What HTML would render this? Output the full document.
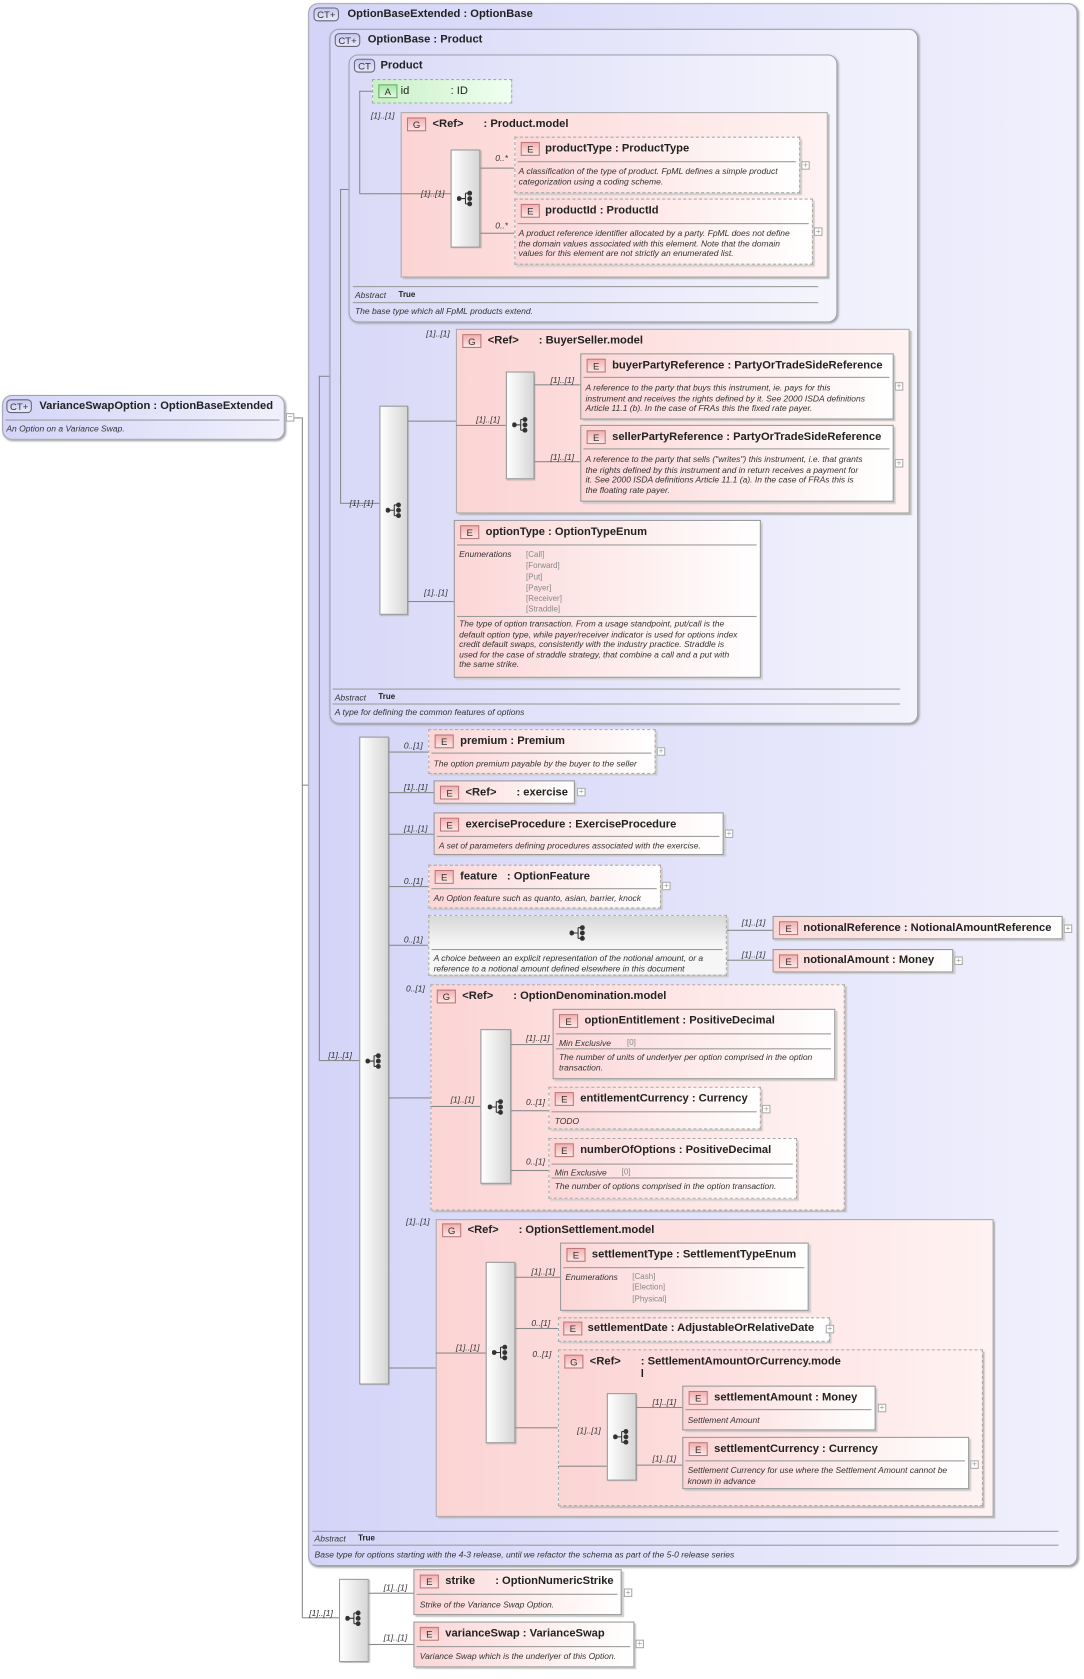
<!DOCTYPE html>
<html><head><meta charset="utf-8"><style>
html,body{margin:0;padding:0;background:#fff;width:1084px;height:1672px;overflow:hidden}
#r{position:absolute;left:0;top:0;width:1020px;height:1573px;transform:scale(1.0627,1.0675);transform-origin:0 0;font-family:"Liberation Sans",sans-serif}
#r div,#r span{position:absolute;box-sizing:border-box}
#r span{margin-top:1px}
.ct{border:1px solid #a0a0b0;border-radius:9px;background:linear-gradient(to right,#d4d4f8,#f0f0fd);box-shadow:1px 1px 2px #999}
.gp{background:linear-gradient(to right,#fcd4d4,#fff2f2);border:1px solid #aaa;box-shadow:2px 2px 1px #bbb}
.el{background:linear-gradient(to right,#fcd6d6,#fff);border:1px solid #999;box-shadow:2px 2px 1px #ccc}
.d{border-style:dashed!important;border-color:#aaa!important}
.sq{background:linear-gradient(to right,#fff,#d6d6d6);border:1px solid #999;box-shadow:1px 1px 1px #aaa}
.b{width:18px;height:13px;border:1px solid #b77;background:linear-gradient(#f3b0b0,#fce6e6);font-size:9px;text-align:center;line-height:12px;color:#333}
.bc{width:24px;height:13px;border:1px solid #667;border-radius:4px;background:linear-gradient(#c8c8f0,#e8e8fa);font-size:9px;text-align:center;line-height:12px;color:#333}
.t{font-weight:bold;font-size:10.5px;color:#222;white-space:nowrap}
.i{font-style:italic;font-size:8px;color:#333;white-space:nowrap;line-height:9.6px}
.e{font-size:7.5px;color:#888;line-height:10.3px;white-space:nowrap}
.m{font-style:italic;font-size:8px;color:#333;white-space:nowrap}
.h{height:0;border-top:1px solid #888}
.v{width:0;border-left:1px solid #888}
.s{height:0;border-top:1px solid #999}
.p{width:8px;height:8px;border:1px solid #aaa;background:#fff;font-size:8px;line-height:6px;text-align:center;color:#999}
</style></head><body><div id="r">
<div class="ct" style="left:2px;top:370px;width:266px;height:42px"></div>
<div class="bc" style="left:6px;top:374px">CT+</div>
<span class="t" style="left:37px;top:373px">VarianceSwapOption : OptionBaseExtended</span>
<div class="s" style="left:5px;top:393px;width:258px"></div>
<span class="i" style="left:6px;top:396px">An Option on a Variance Swap.</span>
<div class="p" style="left:269px;top:387px">−</div>
<div class="h" style="left:277px;top:391px;width:7px"></div>
<div class="v" style="left:284px;top:391px;height:1124px"></div>
<div class="h" style="left:284px;top:735px;width:6px"></div>
<div class="h" style="left:284px;top:1515px;width:35px"></div>

<div class="ct" style="left:290px;top:3px;width:724px;height:1464px"></div>
<div class="bc" style="left:295px;top:7px">CT+</div>
<span class="t" style="left:327px;top:6px">OptionBaseExtended : OptionBase</span>
<div class="v" style="left:300px;top:352px;height:641px"></div>
<div class="h" style="left:300px;top:352px;width:10px"></div>
<div class="h" style="left:300px;top:993px;width:38px"></div>

<div class="ct" style="left:310px;top:27px;width:554px;height:651px;background:linear-gradient(to right,#d8d8f8,#f3f3fd)"></div>
<div class="bc" style="left:315px;top:31px">CT+</div>
<span class="t" style="left:346px;top:30px">OptionBase : Product</span>
<div class="v" style="left:320px;top:177px;height:294px"></div>
<div class="h" style="left:320px;top:177px;width:8px"></div>
<div class="h" style="left:320px;top:471px;width:37px"></div>

<div class="ct" style="left:328px;top:51px;width:460px;height:251px;background:linear-gradient(to right,#dadaf8,#f5f5fd)"></div>
<div class="bc" style="left:333px;top:55px;width:20px">CT</div>
<span class="t" style="left:358px;top:54px">Product</span>
<div class="v" style="left:338px;top:85px;height:96px"></div>
<div class="h" style="left:338px;top:85px;width:12px"></div>
<div class="h" style="left:338px;top:181px;width:39px"></div>
<div style="left:350px;top:74px;width:132px;height:23px;border:1px dashed #aaa;background:linear-gradient(to right,#c8f0c8,#f0fff0)"></div>
<div class="b" style="left:356px;top:79px;border-color:#6a6;background:linear-gradient(#a8e8a8,#e0f8e0)">A</div>
<span class="t" style="left:377px;top:78px;font-weight:normal">id</span>
<span class="t" style="left:424px;top:78px;font-weight:normal">: ID</span>
<span class="m" style="left:349px;top:103px">[1]..[1]</span>
<div class="gp" style="left:377px;top:105px;width:402px;height:155px"></div>
<div class="b" style="left:383px;top:110px">G</div>
<span class="t" style="left:407px;top:109px">&lt;Ref&gt;</span>
<span class="t" style="left:455px;top:109px">: Product.model</span>
<div class="h" style="left:377px;top:181px;width:47px"></div>
<span class="m" style="left:396px;top:176px">[1]..[1]</span>
<div class="sq" style="left:424px;top:140px;width:28px;height:92px"></div>
<div class="h" style="left:452px;top:157px;width:32px"></div>
<div class="h" style="left:452px;top:218px;width:32px"></div>
<span class="m" style="left:466px;top:143px">0..*</span>
<span class="m" style="left:466px;top:206px">0..*</span>
<div class="el d" style="left:484px;top:128px;width:269px;height:53px"></div>
<div class="b" style="left:490px;top:133px">E</div>
<span class="t" style="left:513px;top:132px">productType : ProductType</span>
<div class="s" style="left:487px;top:151px;width:262px"></div>
<span class="i" style="left:488px;top:155px">A classification of the type of product. FpML defines a simple product<br>categorization using a coding scheme.</span>
<div class="p" style="left:754px;top:151px">+</div>
<div class="el d" style="left:484px;top:186px;width:281px;height:62px"></div>
<div class="b" style="left:490px;top:191px">E</div>
<span class="t" style="left:513px;top:190px">productId : ProductId</span>
<div class="s" style="left:487px;top:209px;width:274px"></div>
<span class="i" style="left:488px;top:213px">A product reference identifier allocated by a party. FpML does not define<br>the domain values associated with this element. Note that the domain<br>values for this element are not strictly an enumerated list.</span>
<div class="p" style="left:766px;top:213px">+</div>
<div class="s" style="left:332px;top:268px;width:438px"></div>
<span class="i" style="left:334px;top:271px">Abstract</span><span class="t" style="left:375px;top:270px;font-size:7.5px">True</span>
<div class="s" style="left:332px;top:283px;width:438px"></div>
<span class="i" style="left:334px;top:286px">The base type which all FpML products extend.</span>

<div class="sq" style="left:357px;top:380px;width:27px;height:196px"></div>
<span class="m" style="left:329px;top:466px">[1]..[1]</span>
<div class="h" style="left:384px;top:394px;width:45px"></div>
<div class="h" style="left:384px;top:563px;width:43px"></div>
<span class="m" style="left:401px;top:307px">[1]..[1]</span>
<div class="gp" style="left:429px;top:308px;width:427px;height:173px"></div>
<div class="b" style="left:435px;top:313px">G</div>
<span class="t" style="left:459px;top:312px">&lt;Ref&gt;</span>
<span class="t" style="left:507px;top:312px">: BuyerSeller.model</span>
<div class="h" style="left:429px;top:398px;width:47px"></div>
<span class="m" style="left:448px;top:388px">[1]..[1]</span>
<div class="sq" style="left:476px;top:348px;width:27px;height:101px"></div>
<div class="h" style="left:503px;top:360px;width:43px"></div>
<div class="h" style="left:503px;top:432px;width:43px"></div>
<span class="m" style="left:518px;top:351px">[1]..[1]</span>
<span class="m" style="left:518px;top:423px">[1]..[1]</span>
<div class="el" style="left:546px;top:331px;width:295px;height:62px"></div>
<div class="b" style="left:552px;top:336px">E</div>
<span class="t" style="left:576px;top:335px">buyerPartyReference : PartyOrTradeSideReference</span>
<div class="s" style="left:549px;top:353px;width:288px"></div>
<span class="i" style="left:551px;top:358px">A reference to the party that buys this instrument, ie. pays for this<br>instrument and receives the rights defined by it. See 2000 ISDA definitions<br>Article 11.1 (b). In the case of FRAs this the fixed rate payer.</span>
<div class="p" style="left:842px;top:358px">+</div>
<div class="el" style="left:546px;top:398px;width:295px;height:72px"></div>
<div class="b" style="left:552px;top:403px">E</div>
<span class="t" style="left:576px;top:402px">sellerPartyReference : PartyOrTradeSideReference</span>
<div class="s" style="left:549px;top:420px;width:288px"></div>
<span class="i" style="left:551px;top:425px">A reference to the party that sells ("writes") this instrument, i.e. that grants<br>the rights defined by this instrument and in return receives a payment for<br>it. See 2000 ISDA definitions Article 11.1 (a). In the case of FRAs this is<br>the floating rate payer.</span>
<div class="p" style="left:842px;top:430px">+</div>
<span class="m" style="left:399px;top:550px">[1]..[1]</span>
<div class="el" style="left:427px;top:487px;width:289px;height:148px"></div>
<div class="b" style="left:433px;top:492px">E</div>
<span class="t" style="left:457px;top:491px">optionType : OptionTypeEnum</span>
<div class="s" style="left:430px;top:510px;width:282px"></div>
<span class="i" style="left:432px;top:514px">Enumerations</span>
<span class="e" style="left:495px;top:514px">[Call]<br>[Forward]<br>[Put]<br>[Payer]<br>[Receiver]<br>[Straddle]</span>
<div class="s" style="left:430px;top:577px;width:282px"></div>
<span class="i" style="left:432px;top:579px">The type of option transaction. From a usage standpoint, put/call is the<br>default option type, while payer/receiver indicator is used for options index<br>credit default swaps, consistently with the industry practice. Straddle is<br>used for the case of straddle strategy, that combine a call and a put with<br>the same strike.</span>
<div class="s" style="left:313px;top:645px;width:534px"></div>
<span class="i" style="left:315px;top:648px">Abstract</span><span class="t" style="left:356px;top:647px;font-size:7.5px">True</span>
<div class="s" style="left:313px;top:659px;width:534px"></div>
<span class="i" style="left:315px;top:662px">A type for defining the common features of options</span>

<div class="sq" style="left:338px;top:690px;width:28px;height:607px"></div>
<span class="m" style="left:309px;top:983px">[1]..[1]</span>
<div class="h" style="left:366px;top:704px;width:37px"></div>
<div class="h" style="left:366px;top:742px;width:42px"></div>
<div class="h" style="left:366px;top:781px;width:42px"></div>
<div class="h" style="left:366px;top:830px;width:37px"></div>
<div class="h" style="left:366px;top:885px;width:37px"></div>
<div class="h" style="left:366px;top:1028px;width:39px"></div>
<div class="h" style="left:366px;top:1281px;width:44px"></div>
<span class="m" style="left:380px;top:693px">0..[1]</span>
<span class="m" style="left:380px;top:732px">[1]..[1]</span>
<span class="m" style="left:380px;top:771px">[1]..[1]</span>
<span class="m" style="left:380px;top:820px">0..[1]</span>
<span class="m" style="left:380px;top:875px">0..[1]</span>
<span class="m" style="left:382px;top:921px">0..[1]</span>
<span class="m" style="left:382px;top:1139px">[1]..[1]</span>

<div class="el d" style="left:403px;top:683px;width:214px;height:42px"></div>
<div class="b" style="left:409px;top:688px">E</div>
<span class="t" style="left:433px;top:687px">premium : Premium</span>
<div class="s" style="left:406px;top:705px;width:207px"></div>
<span class="i" style="left:408px;top:710px">The option premium payable by the buyer to the seller</span>
<div class="p" style="left:618px;top:700px">+</div>

<div class="el" style="left:408px;top:731px;width:133px;height:22px"></div>
<div class="b" style="left:414px;top:736px">E</div>
<span class="t" style="left:438px;top:735px">&lt;Ref&gt;</span><span class="t" style="left:486px;top:735px">: exercise</span>
<div class="p" style="left:543px;top:738px">+</div>

<div class="el" style="left:408px;top:761px;width:273px;height:40px"></div>
<div class="b" style="left:414px;top:766px">E</div>
<span class="t" style="left:438px;top:765px">exerciseProcedure : ExerciseProcedure</span>
<div class="s" style="left:411px;top:783px;width:266px"></div>
<span class="i" style="left:413px;top:787px">A set of parameters defining procedures associated with the exercise.</span>
<div class="p" style="left:682px;top:777px">+</div>

<div class="el d" style="left:403px;top:810px;width:219px;height:41px"></div>
<div class="b" style="left:409px;top:815px">E</div>
<span class="t" style="left:433px;top:814px">feature</span><span class="t" style="left:477px;top:814px">: OptionFeature</span>
<div class="s" style="left:406px;top:832px;width:212px"></div>
<span class="i" style="left:408px;top:836px">An Option feature such as quanto, asian, barrier, knock</span>
<div class="p" style="left:623px;top:826px">+</div>

<div style="left:403px;top:857px;width:281px;height:57px;border:1px dashed #aaa;background:linear-gradient(#d8d8d8,#f6f6f6 50%,#f6f6f6);box-shadow:2px 2px 1px #ccc"></div>
<svg style="position:absolute;left:536px;top:866px" width="16" height="16" viewBox="0 0 16 16"><g fill="#333" stroke="#333"><circle cx="2" cy="8" r="1.8"/><circle cx="12" cy="3" r="1.8"/><circle cx="12" cy="8" r="1.8"/><circle cx="12" cy="13" r="1.8"/><path d="M2 8H8M8 3V13M8 3H12M8 13H12" fill="none" stroke-width="1"/></g></svg>
<div class="s" style="left:406px;top:889px;width:274px"></div>
<span class="i" style="left:408px;top:892px">A choice between an explicit representation of the notional amount, or a<br>reference to a notional amount defined elsewhere in this document</span>
<div class="h" style="left:684px;top:871px;width:43px"></div>
<div class="h" style="left:684px;top:899px;width:43px"></div>
<span class="m" style="left:698px;top:859px">[1]..[1]</span>
<span class="m" style="left:698px;top:889px">[1]..[1]</span>
<div class="el" style="left:727px;top:858px;width:273px;height:22px"></div>
<div class="b" style="left:733px;top:863px">E</div>
<span class="t" style="left:756px;top:862px">notionalReference : NotionalAmountReference</span>
<div class="p" style="left:1001px;top:866px">+</div>
<div class="el" style="left:727px;top:889px;width:170px;height:22px"></div>
<div class="b" style="left:733px;top:894px">E</div>
<span class="t" style="left:756px;top:892px">notionalAmount : Money</span>
<div class="p" style="left:898px;top:896px">+</div>

<div class="gp d" style="left:405px;top:922px;width:390px;height:212px"></div>
<div class="b" style="left:411px;top:927px">G</div>
<span class="t" style="left:435px;top:926px">&lt;Ref&gt;</span>
<span class="t" style="left:483px;top:926px">: OptionDenomination.model</span>
<div class="h" style="left:405px;top:1036px;width:47px"></div>
<span class="m" style="left:424px;top:1025px">[1]..[1]</span>
<div class="sq" style="left:452px;top:964px;width:29px;height:145px"></div>
<div class="h" style="left:481px;top:978px;width:39px"></div>
<div class="h" style="left:481px;top:1040px;width:35px"></div>
<div class="h" style="left:481px;top:1096px;width:35px"></div>
<span class="m" style="left:495px;top:967px">[1]..[1]</span>
<span class="m" style="left:495px;top:1027px">0..[1]</span>
<span class="m" style="left:495px;top:1083px">0..[1]</span>
<div class="el" style="left:520px;top:945px;width:266px;height:66px"></div>
<div class="b" style="left:526px;top:950px">E</div>
<span class="t" style="left:550px;top:949px">optionEntitlement : PositiveDecimal</span>
<div class="s" style="left:523px;top:968px;width:259px"></div>
<span class="i" style="left:526px;top:972px">Min Exclusive</span><span class="e" style="left:590px;top:971px">[0]</span>
<div class="s" style="left:523px;top:982px;width:259px"></div>
<span class="i" style="left:526px;top:985px">The number of units of underlyer per option comprised in the option<br>transaction.</span>
<div class="el d" style="left:516px;top:1018px;width:200px;height:40px"></div>
<div class="b" style="left:522px;top:1023px">E</div>
<span class="t" style="left:546px;top:1022px">entitlementCurrency : Currency</span>
<div class="s" style="left:519px;top:1041px;width:193px"></div>
<span class="i" style="left:522px;top:1045px">TODO</span>
<div class="p" style="left:717px;top:1035px">+</div>
<div class="el d" style="left:516px;top:1066px;width:234px;height:57px"></div>
<div class="b" style="left:522px;top:1071px">E</div>
<span class="t" style="left:546px;top:1070px">numberOfOptions : PositiveDecimal</span>
<div class="s" style="left:519px;top:1090px;width:227px"></div>
<span class="i" style="left:522px;top:1093px">Min Exclusive</span><span class="e" style="left:585px;top:1092px">[0]</span>
<div class="s" style="left:519px;top:1103px;width:227px"></div>
<span class="i" style="left:522px;top:1106px">The number of options comprised in the option transaction.</span>

<div class="gp" style="left:410px;top:1142px;width:525px;height:279px"></div>
<div class="b" style="left:416px;top:1146px">G</div>
<span class="t" style="left:440px;top:1145px">&lt;Ref&gt;</span>
<span class="t" style="left:488px;top:1145px">: OptionSettlement.model</span>
<div class="h" style="left:410px;top:1267px;width:47px"></div>
<span class="m" style="left:429px;top:1257px">[1]..[1]</span>
<div class="sq" style="left:457px;top:1182px;width:28px;height:170px"></div>
<div class="h" style="left:485px;top:1196px;width:42px"></div>
<div class="h" style="left:485px;top:1244px;width:40px"></div>
<div class="h" style="left:485px;top:1337px;width:40px"></div>
<span class="m" style="left:500px;top:1186px">[1]..[1]</span>
<span class="m" style="left:500px;top:1234px">0..[1]</span>
<span class="m" style="left:501px;top:1263px">0..[1]</span>
<div class="el" style="left:527px;top:1164px;width:234px;height:64px"></div>
<div class="b" style="left:533px;top:1169px">E</div>
<span class="t" style="left:557px;top:1168px">settlementType : SettlementTypeEnum</span>
<div class="s" style="left:530px;top:1187px;width:227px"></div>
<span class="i" style="left:532px;top:1191px">Enumerations</span>
<span class="e" style="left:595px;top:1190px">[Cash]<br>[Election]<br>[Physical]</span>
<div class="el d" style="left:525px;top:1234px;width:256px;height:23px"></div>
<div class="b" style="left:530px;top:1238px">E</div>
<span class="t" style="left:553px;top:1237px">settlementDate : AdjustableOrRelativeDate</span>
<div class="p" style="left:777px;top:1241px">+</div>
<div class="gp d" style="left:525px;top:1264px;width:400px;height:147px"></div>
<div class="b" style="left:531px;top:1269px">G</div>
<span class="t" style="left:555px;top:1268px">&lt;Ref&gt;</span>
<span class="t" style="left:603px;top:1268px">: SettlementAmountOrCurrency.mode<br>l</span>
<div class="h" style="left:525px;top:1373px;width:46px"></div>
<span class="m" style="left:543px;top:1335px">[1]..[1]</span>
<div class="sq" style="left:571px;top:1305px;width:28px;height:82px"></div>
<div class="h" style="left:599px;top:1318px;width:43px"></div>
<div class="h" style="left:599px;top:1372px;width:43px"></div>
<span class="m" style="left:614px;top:1308px">[1]..[1]</span>
<span class="m" style="left:614px;top:1361px">[1]..[1]</span>
<div class="el" style="left:642px;top:1298px;width:182px;height:42px"></div>
<div class="b" style="left:648px;top:1303px">E</div>
<span class="t" style="left:672px;top:1302px">settlementAmount : Money</span>
<div class="s" style="left:645px;top:1320px;width:175px"></div>
<span class="i" style="left:647px;top:1325px">Settlement Amount</span>
<div class="p" style="left:826px;top:1315px">+</div>
<div class="el" style="left:642px;top:1346px;width:270px;height:49px"></div>
<div class="b" style="left:648px;top:1351px">E</div>
<span class="t" style="left:672px;top:1350px">settlementCurrency : Currency</span>
<div class="s" style="left:645px;top:1368px;width:263px"></div>
<span class="i" style="left:647px;top:1372px">Settlement Currency for use where the Settlement Amount cannot be<br>known in advance</span>
<div class="p" style="left:913px;top:1368px">+</div>

<div class="s" style="left:294px;top:1434px;width:702px"></div>
<span class="i" style="left:296px;top:1436px">Abstract</span><span class="t" style="left:337px;top:1435px;font-size:7.5px">True</span>
<div class="s" style="left:294px;top:1447px;width:702px"></div>
<span class="i" style="left:296px;top:1451px">Base type for options starting with the 4-3 release, until we refactor the schema as part of the 5-0 release series</span>

<span class="m" style="left:291px;top:1506px">[1]..[1]</span>
<div class="sq" style="left:319px;top:1479px;width:28px;height:78px"></div>
<div class="h" style="left:347px;top:1492px;width:42px"></div>
<div class="h" style="left:347px;top:1540px;width:42px"></div>
<span class="m" style="left:361px;top:1482px">[1]..[1]</span>
<span class="m" style="left:361px;top:1529px">[1]..[1]</span>
<div class="el" style="left:389px;top:1470px;width:196px;height:43px"></div>
<div class="b" style="left:395px;top:1475px">E</div>
<span class="t" style="left:419px;top:1474px">strike</span><span class="t" style="left:466px;top:1474px">: OptionNumericStrike</span>
<div class="s" style="left:392px;top:1493px;width:189px"></div>
<span class="i" style="left:395px;top:1498px">Strike of the Variance Swap Option.</span>
<div class="p" style="left:587px;top:1488px">+</div>
<div class="el" style="left:389px;top:1519px;width:208px;height:43px"></div>
<div class="b" style="left:395px;top:1524px">E</div>
<span class="t" style="left:419px;top:1523px">varianceSwap : VarianceSwap</span>
<div class="s" style="left:392px;top:1542px;width:201px"></div>
<span class="i" style="left:395px;top:1546px">Variance Swap which is the underlyer of this Option.</span>
<div class="p" style="left:598px;top:1536px">+</div>

<svg style="position:absolute;left:430px;top:178px" width="16" height="16" viewBox="0 0 16 16"><g fill="#333" stroke="#333"><circle cx="2" cy="8" r="1.8"/><circle cx="12" cy="3" r="1.8"/><circle cx="12" cy="8" r="1.8"/><circle cx="12" cy="13" r="1.8"/><path d="M2 8H8M8 3V13M8 3H12M8 13H12" fill="none"/></g></svg>
<svg style="position:absolute;left:482px;top:390px" width="16" height="16" viewBox="0 0 16 16"><g fill="#333" stroke="#333"><circle cx="2" cy="8" r="1.8"/><circle cx="12" cy="3" r="1.8"/><circle cx="12" cy="8" r="1.8"/><circle cx="12" cy="13" r="1.8"/><path d="M2 8H8M8 3V13M8 3H12M8 13H12" fill="none"/></g></svg>
<svg style="position:absolute;left:363px;top:470px" width="16" height="16" viewBox="0 0 16 16"><g fill="#333" stroke="#333"><circle cx="2" cy="8" r="1.8"/><circle cx="12" cy="3" r="1.8"/><circle cx="12" cy="8" r="1.8"/><circle cx="12" cy="13" r="1.8"/><path d="M2 8H8M8 3V13M8 3H12M8 13H12" fill="none"/></g></svg>
<svg style="position:absolute;left:344px;top:986px" width="16" height="16" viewBox="0 0 16 16"><g fill="#333" stroke="#333"><circle cx="2" cy="8" r="1.8"/><circle cx="12" cy="3" r="1.8"/><circle cx="12" cy="8" r="1.8"/><circle cx="12" cy="13" r="1.8"/><path d="M2 8H8M8 3V13M8 3H12M8 13H12" fill="none"/></g></svg>
<svg style="position:absolute;left:459px;top:1029px" width="16" height="16" viewBox="0 0 16 16"><g fill="#333" stroke="#333"><circle cx="2" cy="8" r="1.8"/><circle cx="12" cy="3" r="1.8"/><circle cx="12" cy="8" r="1.8"/><circle cx="12" cy="13" r="1.8"/><path d="M2 8H8M8 3V13M8 3H12M8 13H12" fill="none"/></g></svg>
<svg style="position:absolute;left:463px;top:1259px" width="16" height="16" viewBox="0 0 16 16"><g fill="#333" stroke="#333"><circle cx="2" cy="8" r="1.8"/><circle cx="12" cy="3" r="1.8"/><circle cx="12" cy="8" r="1.8"/><circle cx="12" cy="13" r="1.8"/><path d="M2 8H8M8 3V13M8 3H12M8 13H12" fill="none"/></g></svg>
<svg style="position:absolute;left:577px;top:1338px" width="16" height="16" viewBox="0 0 16 16"><g fill="#333" stroke="#333"><circle cx="2" cy="8" r="1.8"/><circle cx="12" cy="3" r="1.8"/><circle cx="12" cy="8" r="1.8"/><circle cx="12" cy="13" r="1.8"/><path d="M2 8H8M8 3V13M8 3H12M8 13H12" fill="none"/></g></svg>
<svg style="position:absolute;left:325px;top:1508px" width="16" height="16" viewBox="0 0 16 16"><g fill="#333" stroke="#333"><circle cx="2" cy="8" r="1.8"/><circle cx="12" cy="3" r="1.8"/><circle cx="12" cy="8" r="1.8"/><circle cx="12" cy="13" r="1.8"/><path d="M2 8H8M8 3V13M8 3H12M8 13H12" fill="none"/></g></svg>
</div></body></html>
